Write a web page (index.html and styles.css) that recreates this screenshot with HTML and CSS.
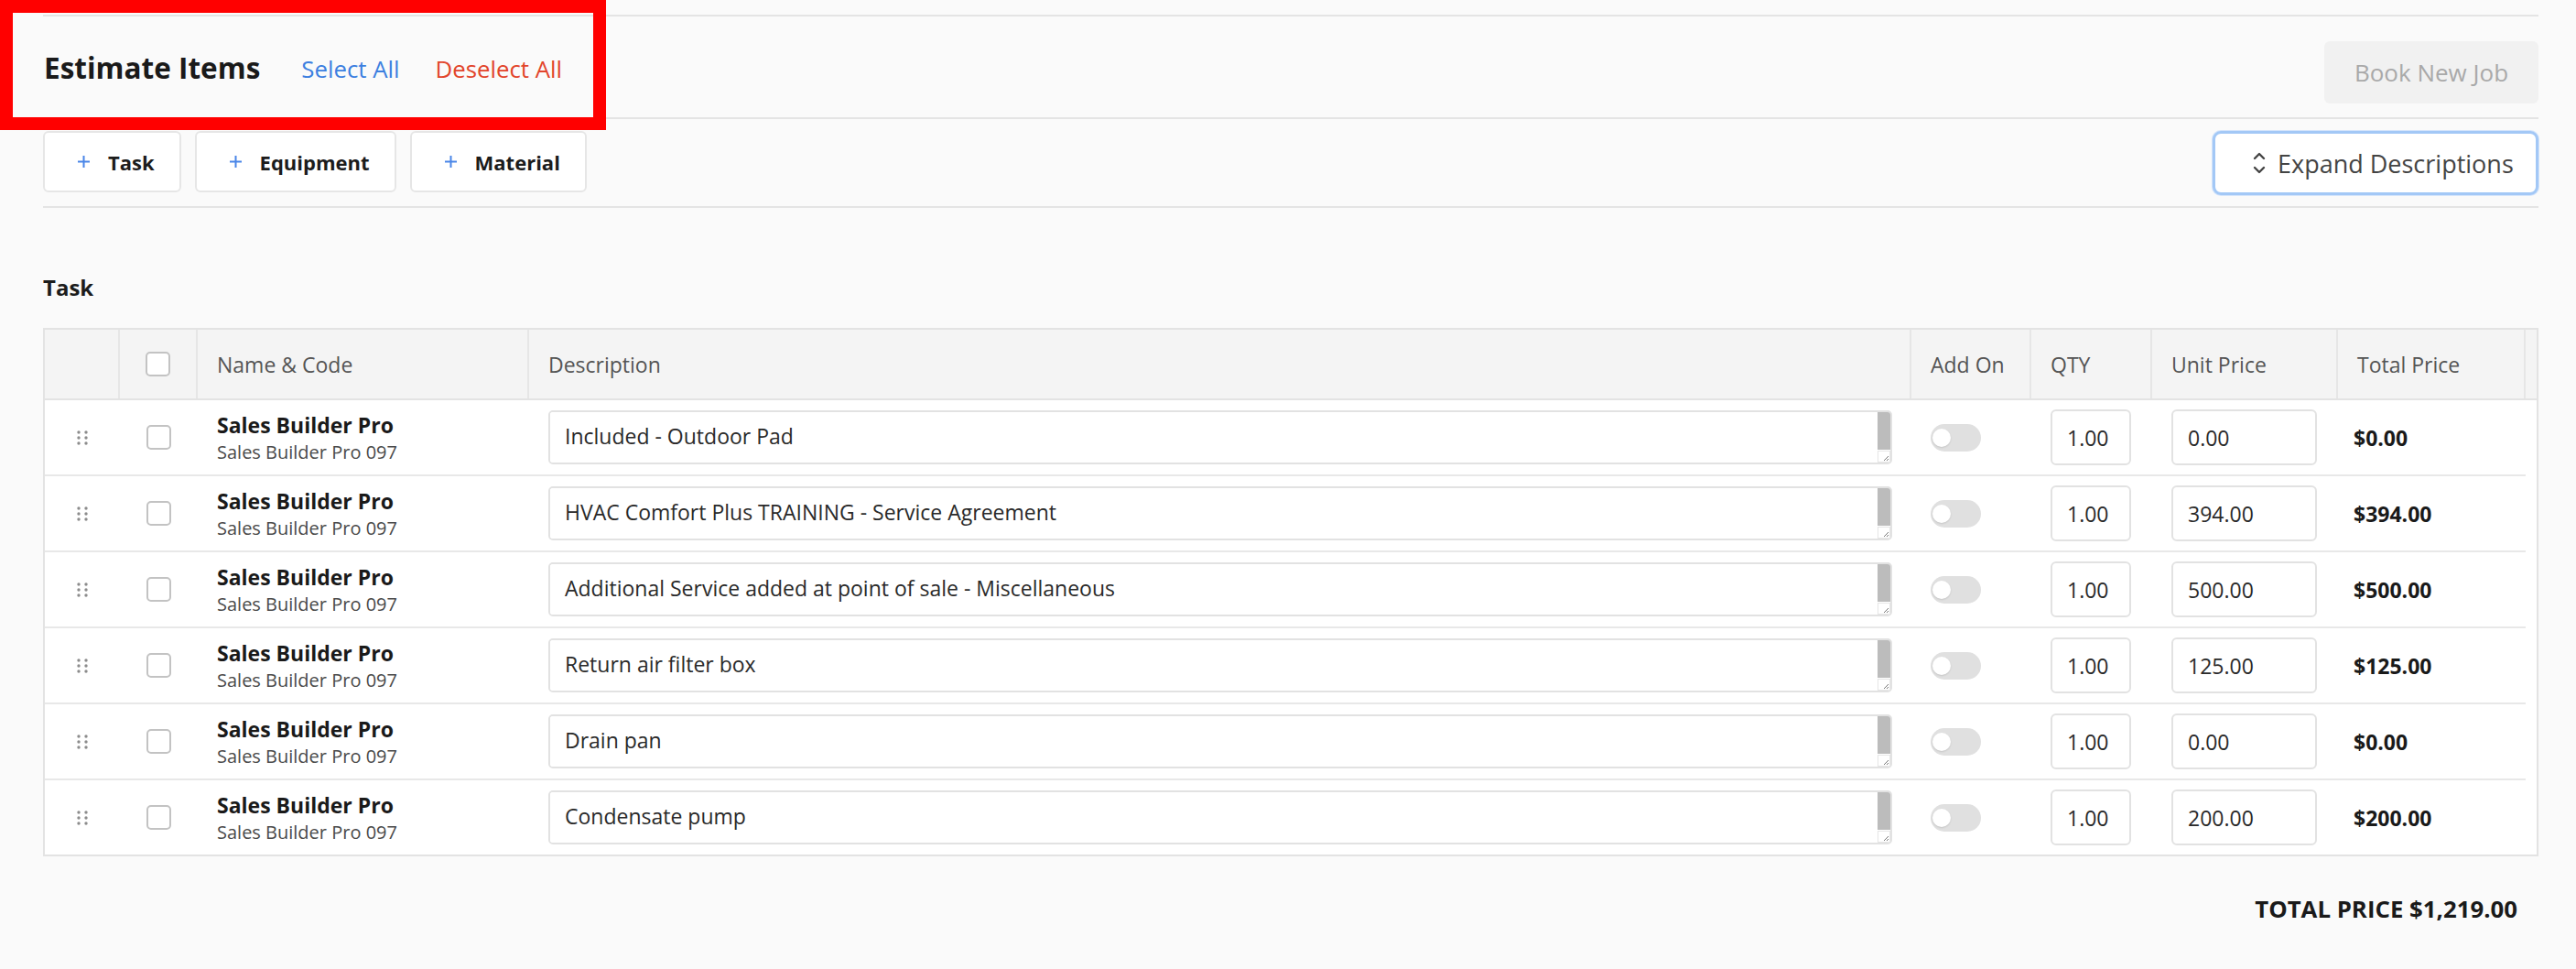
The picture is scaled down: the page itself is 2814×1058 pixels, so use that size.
FILE: index.html
```html
<!DOCTYPE html>
<html lang="en">
<head>
    <meta charset="UTF-8">
    <meta name="viewport" content="width=device-width, initial-scale=1.0">
    <title>Estimate Items</title>
    <link rel="stylesheet" href="styles.css">
</head>
<body>
    <div class="page">
        <div class="highlight"></div>
        <div class="estimate">
            <div class="estimate-head">
                <h2>Estimate Items</h2>
                <a class="link select" href="#">Select All</a>
                <a class="link deselect" href="#">Deselect All</a>
                <button class="book-btn" disabled>Book New Job</button>
            </div>

            <div class="toolbar">
                <button class="add-btn"><svg width="15" height="15" viewBox="0 0 15 15"><path d="M7.5 1v13M1 7.5h13" stroke="#4a86e8" stroke-width="2" fill="none"/></svg>Task</button>
                <button class="add-btn"><svg width="15" height="15" viewBox="0 0 15 15"><path d="M7.5 1v13M1 7.5h13" stroke="#4a86e8" stroke-width="2" fill="none"/></svg>Equipment</button>
                <button class="add-btn"><svg width="15" height="15" viewBox="0 0 15 15"><path d="M7.5 1v13M1 7.5h13" stroke="#4a86e8" stroke-width="2" fill="none"/></svg>Material</button>
                <button class="expand-btn"><svg width="16" height="28" viewBox="0 0 16 28"><path d="M3 9l5-5 5 5M3 19l5 5 5-5" stroke="#444" stroke-width="2.4" fill="none" stroke-linecap="round" stroke-linejoin="round"/></svg>Expand Descriptions</button>
            </div>

            <div class="group-title">Task</div>

            <div class="items">
                <div class="items-head">
                    <div class="th"></div>
                    <div class="th center"><span class="check"></span></div>
                    <div class="th">Name &amp; Code</div>
                    <div class="th">Description</div>
                    <div class="th">Add On</div>
                    <div class="th">QTY</div>
                    <div class="th">Unit Price</div>
                    <div class="th">Total Price</div>
                    <div class="th gutter"></div>
                </div>
                <div class="items-body">
                    <div class="row">
                        <div class="td center"><svg class="grip" width="14" height="18" viewBox="0 0 14 18"><g fill="#8c8c8c"><circle cx="3" cy="3" r="1.7"/><circle cx="11" cy="3" r="1.7"/><circle cx="3" cy="9" r="1.7"/><circle cx="11" cy="9" r="1.7"/><circle cx="3" cy="15" r="1.7"/><circle cx="11" cy="15" r="1.7"/></g></svg></div>
                        <div class="td center"><span class="check"></span></div>
                        <div class="td name"><strong>Sales Builder Pro</strong><small>Sales Builder Pro 097</small></div>
                        <div class="td"><div class="desc"><textarea>Included - Outdoor Pad</textarea><span class="bar"><i></i><b><svg width="8" height="8" viewBox="0 0 8 8"><path d="M7 2L2 7M7 5L5 7" stroke="#777" stroke-width="1"/></svg></b></span></div></div>
                        <div class="td"><span class="switch"></span></div>
                        <div class="td"><input class="field qty" value="1.00"></div>
                        <div class="td"><input class="field price" value="0.00"></div>
                        <div class="td amount">$0.00</div>
                    </div>
                    <div class="row">
                        <div class="td center"><svg class="grip" width="14" height="18" viewBox="0 0 14 18"><g fill="#8c8c8c"><circle cx="3" cy="3" r="1.7"/><circle cx="11" cy="3" r="1.7"/><circle cx="3" cy="9" r="1.7"/><circle cx="11" cy="9" r="1.7"/><circle cx="3" cy="15" r="1.7"/><circle cx="11" cy="15" r="1.7"/></g></svg></div>
                        <div class="td center"><span class="check"></span></div>
                        <div class="td name"><strong>Sales Builder Pro</strong><small>Sales Builder Pro 097</small></div>
                        <div class="td"><div class="desc"><textarea>HVAC Comfort Plus TRAINING - Service Agreement</textarea><span class="bar"><i></i><b><svg width="8" height="8" viewBox="0 0 8 8"><path d="M7 2L2 7M7 5L5 7" stroke="#777" stroke-width="1"/></svg></b></span></div></div>
                        <div class="td"><span class="switch"></span></div>
                        <div class="td"><input class="field qty" value="1.00"></div>
                        <div class="td"><input class="field price" value="394.00"></div>
                        <div class="td amount">$394.00</div>
                    </div>
                    <div class="row">
                        <div class="td center"><svg class="grip" width="14" height="18" viewBox="0 0 14 18"><g fill="#8c8c8c"><circle cx="3" cy="3" r="1.7"/><circle cx="11" cy="3" r="1.7"/><circle cx="3" cy="9" r="1.7"/><circle cx="11" cy="9" r="1.7"/><circle cx="3" cy="15" r="1.7"/><circle cx="11" cy="15" r="1.7"/></g></svg></div>
                        <div class="td center"><span class="check"></span></div>
                        <div class="td name"><strong>Sales Builder Pro</strong><small>Sales Builder Pro 097</small></div>
                        <div class="td"><div class="desc"><textarea>Additional Service added at point of sale - Miscellaneous</textarea><span class="bar"><i></i><b><svg width="8" height="8" viewBox="0 0 8 8"><path d="M7 2L2 7M7 5L5 7" stroke="#777" stroke-width="1"/></svg></b></span></div></div>
                        <div class="td"><span class="switch"></span></div>
                        <div class="td"><input class="field qty" value="1.00"></div>
                        <div class="td"><input class="field price" value="500.00"></div>
                        <div class="td amount">$500.00</div>
                    </div>
                    <div class="row">
                        <div class="td center"><svg class="grip" width="14" height="18" viewBox="0 0 14 18"><g fill="#8c8c8c"><circle cx="3" cy="3" r="1.7"/><circle cx="11" cy="3" r="1.7"/><circle cx="3" cy="9" r="1.7"/><circle cx="11" cy="9" r="1.7"/><circle cx="3" cy="15" r="1.7"/><circle cx="11" cy="15" r="1.7"/></g></svg></div>
                        <div class="td center"><span class="check"></span></div>
                        <div class="td name"><strong>Sales Builder Pro</strong><small>Sales Builder Pro 097</small></div>
                        <div class="td"><div class="desc"><textarea>Return air filter box</textarea><span class="bar"><i></i><b><svg width="8" height="8" viewBox="0 0 8 8"><path d="M7 2L2 7M7 5L5 7" stroke="#777" stroke-width="1"/></svg></b></span></div></div>
                        <div class="td"><span class="switch"></span></div>
                        <div class="td"><input class="field qty" value="1.00"></div>
                        <div class="td"><input class="field price" value="125.00"></div>
                        <div class="td amount">$125.00</div>
                    </div>
                    <div class="row">
                        <div class="td center"><svg class="grip" width="14" height="18" viewBox="0 0 14 18"><g fill="#8c8c8c"><circle cx="3" cy="3" r="1.7"/><circle cx="11" cy="3" r="1.7"/><circle cx="3" cy="9" r="1.7"/><circle cx="11" cy="9" r="1.7"/><circle cx="3" cy="15" r="1.7"/><circle cx="11" cy="15" r="1.7"/></g></svg></div>
                        <div class="td center"><span class="check"></span></div>
                        <div class="td name"><strong>Sales Builder Pro</strong><small>Sales Builder Pro 097</small></div>
                        <div class="td"><div class="desc"><textarea>Drain pan</textarea><span class="bar"><i></i><b><svg width="8" height="8" viewBox="0 0 8 8"><path d="M7 2L2 7M7 5L5 7" stroke="#777" stroke-width="1"/></svg></b></span></div></div>
                        <div class="td"><span class="switch"></span></div>
                        <div class="td"><input class="field qty" value="1.00"></div>
                        <div class="td"><input class="field price" value="0.00"></div>
                        <div class="td amount">$0.00</div>
                    </div>
                    <div class="row">
                        <div class="td center"><svg class="grip" width="14" height="18" viewBox="0 0 14 18"><g fill="#8c8c8c"><circle cx="3" cy="3" r="1.7"/><circle cx="11" cy="3" r="1.7"/><circle cx="3" cy="9" r="1.7"/><circle cx="11" cy="9" r="1.7"/><circle cx="3" cy="15" r="1.7"/><circle cx="11" cy="15" r="1.7"/></g></svg></div>
                        <div class="td center"><span class="check"></span></div>
                        <div class="td name"><strong>Sales Builder Pro</strong><small>Sales Builder Pro 097</small></div>
                        <div class="td"><div class="desc"><textarea>Condensate pump</textarea><span class="bar"><i></i><b><svg width="8" height="8" viewBox="0 0 8 8"><path d="M7 2L2 7M7 5L5 7" stroke="#777" stroke-width="1"/></svg></b></span></div></div>
                        <div class="td"><span class="switch"></span></div>
                        <div class="td"><input class="field qty" value="1.00"></div>
                        <div class="td"><input class="field price" value="200.00"></div>
                        <div class="td amount">$200.00</div>
                    </div>
                </div>
            </div>

            <div class="total">TOTAL PRICE $1,219.00</div>
        </div>
    </div>
</body>
</html>
```

FILE: styles.css
```css
body {
    margin: 0;
    background: #fafafa;
    font-family: "Open Sans", Arial, sans-serif;
    color: #1c1c1c;
}

.page {
    position: relative;
    height: 1058px;
    padding: 16px 41px 0 47px;
    box-sizing: border-box;
    overflow: hidden;
}

/* red annotation box drawn over the header */
.highlight {
    position: absolute;
    top: 0;
    left: 0;
    width: 662px;
    height: 142px;
    border: 14px solid #ff0000;
    box-sizing: border-box;
    z-index: 5;
}

.estimate {
    border-top: 2px solid #e4e4e4;
}

.estimate-head {
    display: flex;
    align-items: center;
    height: 110px;
    border-bottom: 2px solid #e4e4e4;
}

.estimate-head h2 {
    margin: 0 45px 0 1px;
    font-size: 31.5px;
    font-weight: 700;
    color: #1a1a1a;
}

.link {
    font-size: 25.8px;
    text-decoration: none;
    margin-right: 39px;
    margin-top: 4px;
}

.select {
    color: #3c7fe0;
}

.deselect {
    color: #e2452b;
}

.book-btn {
    margin-left: auto;
    margin-top: 12px;
    width: 234px;
    height: 68px;
    border: none;
    border-radius: 6px;
    background: #f1f1f1;
    color: #a9a9a9;
    font: 26px "Open Sans", Arial, sans-serif;
}

.toolbar {
    display: flex;
    align-items: flex-start;
    gap: 15px;
    padding: 13px 0 12px;
    border-bottom: 2px solid #e4e4e4;
}

.add-btn {
    display: flex;
    align-items: center;
    gap: 19px;
    height: 67px;
    margin: 0;
    padding: 0 27px 0 35px;
    background: #fff;
    border: 2px solid #e6e6e6;
    border-radius: 6px;
    font: 700 22px "Open Sans", Arial, sans-serif;
    color: #1c1c1c;
}

.expand-btn {
    margin-left: auto;
    display: flex;
    align-items: center;
    gap: 12px;
    width: 356px;
    height: 70px;
    padding: 0 0 0 40px;
    background: #fff;
    border: 3px solid #a3c8f6;
    box-shadow: 0 0 0 1px #d3e4fb;
    border-radius: 9px;
    font: 27px "Open Sans", Arial, sans-serif;
    color: #444;
}

.group-title {
    margin: 70px 0 28px;
    font-size: 24px;
    font-weight: 700;
}

.items {
    border: 2px solid #e3e3e3;
    background: #fff;
}

.items-head,
.row {
    display: grid;
    grid-template-columns: 82px 85px 362px 1fr 131px 132px 203px 205px;
}

.items-head {
    grid-template-columns: 82px 85px 362px 1fr 131px 132px 203px 205px 12px;
    height: 75px;
    background: #f4f4f4;
    border-bottom: 2px solid #e3e3e3;
}

.th {
    display: flex;
    align-items: center;
    padding: 0 21px;
    border-right: 2px solid #e6e6e6;
    font-size: 23px;
    color: #555;
}

.th.gutter {
    border-right: none;
    padding: 0;
}

.items-body {
    margin-right: 12px;
}

.row {
    height: 81px;
    border-bottom: 2px solid #e8e8e8;
}

.row:last-child {
    border-bottom: none;
}

.td {
    display: flex;
    align-items: center;
    padding: 0 21px;
    min-width: 0;
}

.center {
    justify-content: center;
    padding: 0;
}

.check {
    width: 23px;
    height: 23px;
    border: 2px solid #c3c3c3;
    border-radius: 5px;
    background: #fff;
}

.name {
    flex-direction: column;
    align-items: flex-start;
    justify-content: center;
    padding-top: 2px;
}

.name strong {
    font-size: 23px;
    line-height: 31px;
    font-weight: 700;
    color: #1a1a1a;
}

.name small {
    font-size: 20px;
    line-height: 28px;
    color: #4a4a4a;
}

.desc {
    display: flex;
    flex: 1;
    height: 59px;
    border: 2px solid #e2e2e2;
    border-radius: 5px;
    box-sizing: border-box;
    overflow: hidden;
}

.desc textarea {
    flex: 1;
    border: none;
    outline: none;
    resize: none;
    overflow: hidden;
    padding: 11px 16px;
    font: 23px/31px "Open Sans", Arial, sans-serif;
    color: #2a2a2a;
    background: #fff;
}

.bar {
    display: flex;
    flex-direction: column;
    width: 14px;
}

.bar i {
    flex: 1;
    background: #bcbcbc;
}

.bar b {
    display: flex;
    align-items: flex-end;
    justify-content: flex-end;
    height: 13px;
    margin-top: 1px;
    border: 1px solid #e6e6e6;
    box-sizing: border-box;
    background: #fff;
}

.switch {
    display: flex;
    align-items: center;
    width: 55px;
    height: 30px;
    padding: 0 2px;
    box-sizing: border-box;
    border-radius: 15px;
    background: #e0e0e0;
}

.switch::before {
    content: "";
    width: 20px;
    height: 20px;
    border-radius: 50%;
    background: #fff;
    box-shadow: 0 1px 2px rgba(0,0,0,0.12);
}

.field {
    height: 61px;
    padding: 0 16px;
    border: 2px solid #e2e2e2;
    border-radius: 6px;
    box-sizing: border-box;
    font: 23px "Open Sans", Arial, sans-serif;
    color: #2a2a2a;
    background: #fff;
    outline: none;
}

.qty {
    width: 88px;
}

.price {
    width: 159px;
}

.amount {
    padding-left: 17px;
    font-size: 23px;
    font-weight: 700;
    color: #1a1a1a;
}

.total {
    margin-top: 39px;
    padding-right: 23px;
    text-align: right;
    font-size: 25.8px;
    font-weight: 700;
    color: #1a1a1a;
}
```
